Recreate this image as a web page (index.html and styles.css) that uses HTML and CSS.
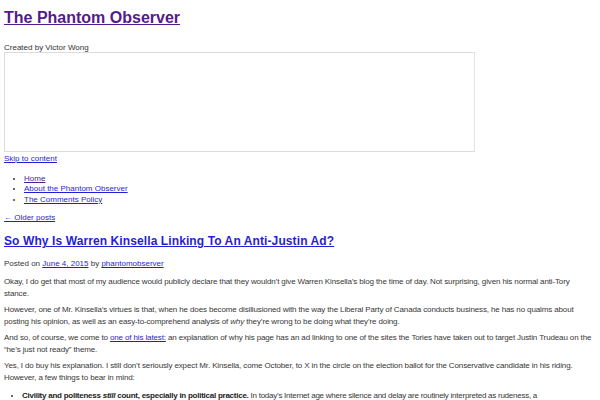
FILE: index.html
```html
<!DOCTYPE html>
<html lang="en">
<head>
<meta charset="utf-8">
<title>The Phantom Observer</title>
<link rel="stylesheet" href="styles.css">
</head>
<body>
<header class="site-header">
  <h1 class="site-title"><a class="visited" href="#">The Phantom Observer</a></h1>
  <p class="site-desc">Created by Victor Wong</p>
  <div class="embed"></div>
  <a class="skip" href="#content">Skip to content</a>
  <ul class="menu">
    <li><a class="visited" href="#">Home</a></li>
    <li><a href="#">About the Phantom Observer</a></li>
    <li><a href="#">The Comments Policy</a></li>
  </ul>
</header>
<nav class="nav-links"><a href="#">&larr; Older posts</a></nav>
<main id="content" class="post">
  <h2 class="post-title"><a href="#">So Why Is Warren Kinsella Linking To An Anti-Justin Ad?</a></h2>
  <div class="post-meta">Posted on <a href="#">June 4, 2015</a> by <a href="#">phantomobserver</a></div>
  <div class="post-body">
    <p>Okay, I do get that most of my audience would publicly declare that they wouldn’t give Warren Kinsella’s blog the time of day. Not surprising, given his normal anti-Tory stance.</p>
    <p>However, one of Mr. Kinsella’s virtues is that, when he does become disillusioned with the way the Liberal Party of Canada conducts business, he has no qualms about posting his opinion, as well as an easy-to-comprehend analysis of <em>why</em> they’re wrong to be doing what they’re doing.</p>
    <p>And so, of course, we come to <a href="#">one of his latest:</a> an explanation of why his page has an ad linking to one of the sites the Tories have taken out to target Justin Trudeau on the “he’s just not ready” theme.</p>
    <p>Yes, I do buy his explanation. I still don’t seriously expect Mr. Kinsella, come October, to X in the circle on the election ballot for the Conservative candidate in his riding. However, a few things to bear in mind:</p>
    <ul class="points">
      <li><strong>Civility and politeness <em>still</em> count, especially in political practice.</strong> In today’s Internet age where silence and delay are routinely interpreted as rudeness, a straightforward reply to a question goes a long way toward earning respect from those who disagree with you.</li>
    </ul>
  </div>
</main>
</body>
</html>
```
FILE: styles.css
```css
html, body {
  margin: 0;
  padding: 0;
  background: #ffffff;
}
body {
  padding: 0 4px 0 4px;
  font-family: "Liberation Sans", Arial, sans-serif;
  font-size: 8px;
  line-height: 10px;
  color: #373737;
}
a {
  color: #1f1fd6;
  text-decoration: underline;
}
a.visited {
  color: #551a8b;
}
.site-title {
  margin: 9px 0 0;
  font-size: 16px;
  line-height: 18px;
  font-weight: bold;
}
.site-desc {
  margin: 16px 0 0;
  color: #333;
}
.embed {
  box-sizing: border-box;
  width: 471px;
  height: 100px;
  margin-top: -1px;
  border: 1px solid #dcdcdc;
  border-right-color: #e4e4e4;
}
.skip {
  display: block;
  margin-top: 2px;
}
.menu {
  margin: 10px 0 8px;
  padding-left: 20px;
  line-height: 10.4px;
}
.nav-links {
  line-height: 10px;
}
.post-title {
  margin: 11px 0 0;
  font-size: 12px;
  line-height: 14px;
  font-weight: bold;
  letter-spacing: 0.1px;
}
.post-meta {
  margin-top: 11px;
}
.post-body {
  margin-top: 7px;
  line-height: 12px;
  letter-spacing: -0.13px;
}
.post-body p {
  margin: 0 0 4px;
}
.points {
  margin: 0;
  padding: 2px 12px 0 18px;
  letter-spacing: -0.25px;
}
.points strong {
  color: #222;
}
```
